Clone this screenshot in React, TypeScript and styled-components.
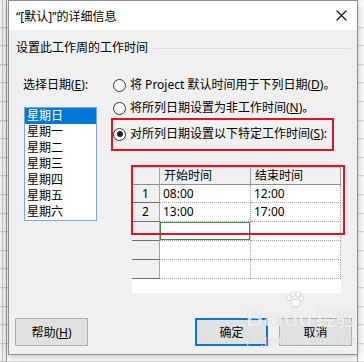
import React from 'react';
import styled, { createGlobalStyle } from 'styled-components';

const GlobalStyle = createGlobalStyle`
  html, body { margin: 0; padding: 0; }
  body {
    font-family: "Noto Sans", "Noto Sans CJK SC", sans-serif;
    font-size: 12px;
    color: #000;
  }
`;

const Page = styled.div`
  position: relative;
  width: 364px;
  height: 362px;
  overflow: hidden;
  display: flex;
  align-items: flex-start;
  background-color: #fff;
  background-image:
    linear-gradient(to right, transparent 357px, #9a9a9a 357px, #9a9a9a 358px, transparent 358px),
    repeating-linear-gradient(to bottom, transparent 0, transparent 17.6px, #d6d6d6 17.6px, #d6d6d6 18.6px);
  background-position: 0 0, 0 9.2px;
`;

const LeftStrip = styled.div`
  width: 7px;
  height: 362px;
  flex-shrink: 0;
  box-sizing: border-box;
  border-right: 1px solid #9c9c9c;
  background-color: #f1f1f1;
  background-image:
    linear-gradient(to right, transparent 2px, #c4c4c4 2px, #c4c4c4 3px, transparent 3px),
    repeating-linear-gradient(to bottom, transparent 0, transparent 17.6px, #bcbcbc 17.6px, #bcbcbc 18.6px);
  background-position: 0 0, 0 9.2px;
`;

const Dialog = styled.div`
  width: 350px;
  height: 355px;
  flex-shrink: 0;
  box-sizing: border-box;
  margin-left: 1px;
  border: 1px solid #8e8e8e;
  background: #f0f0f0;
  display: flex;
  flex-direction: column;
  box-shadow: 0 2px 9px rgba(0, 0, 0, 0.25);
`;

const TitleBar = styled.div`
  height: 29px;
  background: #fff;
  display: flex;
  align-items: center;
  justify-content: space-between;
  padding: 0 10px 0 7px;
  font-size: 12px;
`;

const Body = styled.div`
  flex: 1;
  display: flex;
  flex-direction: column;
`;

const GroupHeader = styled.div`
  display: flex;
  align-items: center;
  height: 16px;
  line-height: 16px;
  margin: 10px 6px 0 7px;
  gap: 5px;
`;

const GroupLine = styled.div`
  flex: 1;
  height: 1px;
  background: #dcdcdc;
`;

const Main = styled.div`
  display: flex;
  margin: 21px 0 0 14px;
`;

const LeftCol = styled.div`
  width: 74px;
  display: flex;
  flex-direction: column;
`;

const Label = styled.div`
  height: 16px;
  line-height: 16px;
  white-space: nowrap;
`;

const ListBox = styled.div`
  margin: 14px 0 0 1px;
  width: 73px;
  height: 114px;
  box-sizing: border-box;
  border: 1px solid #7aa8dc;
  background: #fff;
`;

const ListItem = styled.div<{ selected?: boolean }>`
  height: 16px;
  line-height: 16px;
  padding-left: 2px;
  background: ${p => (p.selected ? '#0078d7' : 'transparent')};
  color: ${p => (p.selected ? '#fff' : '#000')};
`;

const RightCol = styled.div`
  margin-left: 16px;
  display: flex;
  flex-direction: column;
`;

const RadioRow = styled.div<{ top: number }>`
  display: flex;
  align-items: center;
  height: 16px;
  line-height: 16px;
  margin-top: ${p => p.top}px;
  white-space: nowrap;
`;

const RadioCircle = styled.span<{ checked?: boolean }>`
  width: 13px;
  height: 13px;
  box-sizing: border-box;
  border: 1px solid #333;
  border-radius: 50%;
  background: #fff;
  margin-right: 4px;
  display: flex;
  align-items: center;
  justify-content: center;
  flex-shrink: 0;
  &::after {
    content: '';
    display: ${p => (p.checked ? 'block' : 'none')};
    width: 6px;
    height: 6px;
    border-radius: 50%;
    background: #222;
  }
`;

const Highlight = styled.div`
  position: relative;
  margin-top: 10px;
  &::after {
    content: '';
    position: absolute;
    top: -8px;
    left: -2px;
    width: 223px;
    height: 33px;
    box-sizing: border-box;
    border: 2px solid #e3141e;
    pointer-events: none;
  }
`;

const U = styled.span`
  text-decoration: underline;
  text-underline-offset: 1px;
`;

const Table = styled.div`
  position: relative;
  margin: 25px 0 0 19px;
  width: 209px;
  height: 126px;
  background: #fff;
`;

const Grid = styled.div`
  display: grid;
  grid-template-columns: 28px 91px 90px;
  grid-template-rows: 18px 18px 19px 19px 19px 19px;
`;

const HeadCell = styled.div<{ corner?: boolean }>`
  box-sizing: border-box;
  background: #f0f0f0;
  border-top: 1px solid #c8c8c8;
  border-right: 1px solid ${p => (p.corner ? '#a8a8a8' : '#9e9e9e')};
  border-bottom: 1px solid #8c8c8c;
  line-height: 16px;
  padding-left: 4px;
  white-space: nowrap;
`;

const RowHead = styled.div`
  box-sizing: border-box;
  background: #f0f0f0;
  border-right: 1px solid #a8a8a8;
  border-bottom: 1px solid #6f6f6f;
  display: flex;
  align-items: center;
  justify-content: center;
  line-height: 16px;
`;

const DataCell = styled.div<{ active?: boolean }>`
  box-sizing: border-box;
  border-right: 1px dotted #a4a4a4;
  border-bottom: 1px dotted #a4a4a4;
  padding-left: 3px;
  display: flex;
  align-items: center;
  line-height: 16px;
  box-shadow: ${p => (p.active ? 'inset 0 0 0 1px #3c8c3c' : 'none')};
`;

const TableMark = styled.div`
  position: absolute;
  top: -2px;
  left: -1px;
  width: 214px;
  height: 70px;
  box-sizing: border-box;
  border: 2px solid #e3141e;
  pointer-events: none;
`;

const ButtonRow = styled.div`
  margin-top: auto;
  padding: 0 5px 8px 6px;
  display: flex;
  justify-content: space-between;
`;

const ButtonGroup = styled.div`
  display: flex;
  gap: 11px;
`;

const Button = styled.div<{ primary?: boolean }>`
  width: 73px;
  height: 28px;
  box-sizing: border-box;
  border: ${p => (p.primary ? '2px solid #0078d7' : '1px solid #adadad')};
  background: #e1e1e1;
  display: flex;
  align-items: center;
  justify-content: center;
  font-size: 12px;
`;

const Watermark = styled.div`
  position: absolute;
  left: 246px;
  top: 305px;
  display: flex;
  flex-direction: column;
  align-items: center;
  color: rgba(255, 255, 255, 0.75);
  text-shadow: 0 0 1px rgba(0, 0, 0, 0.2);
  pointer-events: none;
`;

const Logo = styled.div`
  display: flex;
  align-items: flex-end;
  font-family: "Liberation Sans", sans-serif;
  font-weight: bold;
  font-size: 24px;
  line-height: 26px;
`;

const LogoCn = styled.span`
  font-family: "Noto Sans CJK SC", sans-serif;
  font-weight: bold;
  font-size: 20px;
  margin-left: 3px;
`;

const Du = styled.span`
  position: relative;
`;

const Paw = styled.svg`
  position: absolute;
  left: 3px;
  top: -14px;
`;

const Site = styled.div`
  font-family: "Liberation Sans", sans-serif;
  font-size: 13px;
  line-height: 14px;
  margin-top: 2px;
  letter-spacing: 0.3px;
`;

const days = ['星期日', '星期一', '星期二', '星期三', '星期四', '星期五', '星期六'];
const rows = [
  { n: '1', start: '08:00', end: '12:00' },
  { n: '2', start: '13:00', end: '17:00' },
  { n: '', start: '', end: '' },
  { n: '', start: '', end: '' },
  { n: '', start: '', end: '' },
];

export default function App() {
  return (
    <Page>
      <GlobalStyle />
      <LeftStrip />
      <Dialog>
        <TitleBar>
          <span>“[默认]”的详细信息</span>
          <svg width="11" height="11" viewBox="0 0 11 11">
            <path d="M0.5 0.5 L10.5 10.5 M10.5 0.5 L0.5 10.5" stroke="#111" strokeWidth="1.1" />
          </svg>
        </TitleBar>
        <Body>
          <GroupHeader>
            <span>设置此工作周的工作时间</span>
            <GroupLine />
          </GroupHeader>
          <Main>
            <LeftCol>
              <Label>选择日期(<U>E</U>):</Label>
              <ListBox>
                {days.map((d, i) => (
                  <ListItem key={d} selected={i === 0}>{d}</ListItem>
                ))}
              </ListBox>
            </LeftCol>
            <RightCol>
              <RadioRow top={0}>
                <RadioCircle />
                将 Project 默认时间用于下列日期(<U>D</U>)。
              </RadioRow>
              <RadioRow top={7}>
                <RadioCircle />
                将所列日期设置为非工作时间(<U>N</U>)。
              </RadioRow>
              <Highlight>
                <RadioRow top={0}>
                  <RadioCircle checked />
                  对所列日期设置以下特定工作时间(<U>S</U>):
                </RadioRow>
              </Highlight>
              <Table>
                <Grid>
                  <HeadCell corner />
                  <HeadCell>开始时间</HeadCell>
                  <HeadCell>结束时间</HeadCell>
                  {rows.map((r, i) => (
                    <React.Fragment key={i}>
                      <RowHead>{r.n}</RowHead>
                      <DataCell active={i === 2}>{r.start}</DataCell>
                      <DataCell>{r.end}</DataCell>
                    </React.Fragment>
                  ))}
                </Grid>
                <TableMark />
              </Table>
            </RightCol>
          </Main>
          <ButtonRow>
            <Button>帮助(<U>H</U>)</Button>
            <ButtonGroup>
              <Button primary>确定</Button>
              <Button>取消</Button>
            </ButtonGroup>
          </ButtonRow>
        </Body>
      </Dialog>
      <Watermark>
        <Logo>
          Bai
          <Du>
            <Paw width="18" height="16" viewBox="0 0 18 16">
              <g fill="rgba(255,255,255,0.75)" stroke="rgba(0,0,0,0.2)" strokeWidth="0.6">
                <ellipse cx="3" cy="7" rx="2.2" ry="2.8" />
                <ellipse cx="7" cy="3" rx="2.2" ry="2.8" />
                <ellipse cx="12" cy="3" rx="2.2" ry="2.8" />
                <ellipse cx="15.5" cy="7.5" rx="2" ry="2.6" />
                <ellipse cx="9.5" cy="12" rx="4.5" ry="3.5" />
              </g>
            </Paw>
            du
          </Du>
          <LogoCn>经验</LogoCn>
        </Logo>
        <Site>jingyan.baidu.com</Site>
      </Watermark>
    </Page>
  );
}
